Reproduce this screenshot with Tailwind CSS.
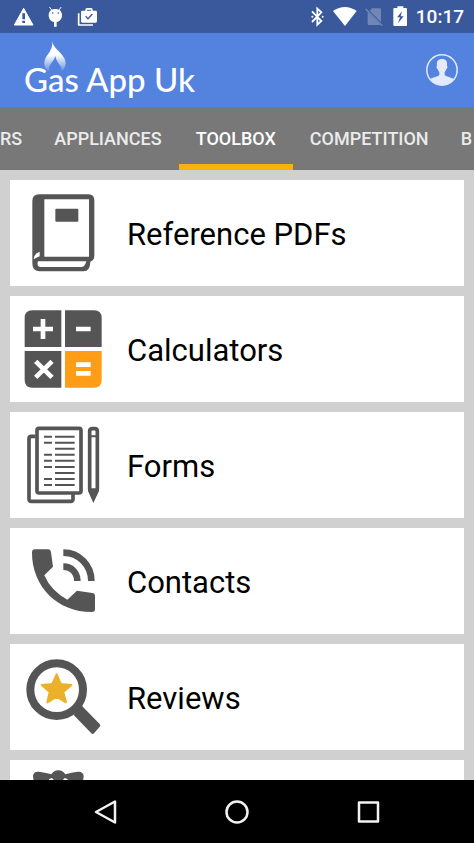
<!DOCTYPE html>
<html lang="en">
<head>
<meta charset="utf-8">
<meta name="viewport" content="width=device-width, initial-scale=1">
<title>Gas App Uk</title>
<script src="https://cdn.jsdelivr.net/npm/@tailwindcss/browser@4"></script>
</head>
<body class="flex h-screen flex-col overflow-hidden bg-[#d0d0d0] font-['Roboto',sans-serif]">
  <!-- Status bar -->
  <div class="flex h-[33px] shrink-0 items-center justify-between bg-[#3a599c] pr-[10px] pl-[14px] text-white">
    <div class="flex items-center gap-[14px]">
      <svg class="h-[21px] w-[20px]" viewBox="42 18 60 63" aria-hidden="true"><path fill="#fff" stroke="#fff" stroke-width="3" stroke-linejoin="round" d="M71 25 99 75H43Z"/><path fill="#3a599c" d="M67 40h8v18h-8zM67 62h8v7h-8z"/></svg>
      <svg class="h-[21px] w-[15px]" viewBox="144 18 45 63" aria-hidden="true"><path stroke="#fff" stroke-width="3" stroke-linecap="round" d="m149 22 7 9M183 22l-7 9"/><path fill="#fff" d="M166 27c12 0 20 7 20 18 0 12-7 20-16 21v14h-8V66c-9-1-16-9-16-21 0-11 8-18 20-18Z"/><circle cx="158" cy="39" r="2.500" fill="#3a599c"/><circle cx="175" cy="39" r="2.500" fill="#3a599c"/></svg>
      <svg class="h-[21px] w-[20px]" viewBox="231 18 60 63" aria-hidden="true"><path fill="none" stroke="#fff" stroke-width="5" stroke-linejoin="round" d="M236 40v35h43"/><path fill="#fff" fill-rule="evenodd" d="M247 32h9v-3q0-5 5-5h12q5 0 5 5v3h9q4 0 4 4v28q0 4-4 4h-40q-4 0-4-4V36q0-4 4-4Zm14 0h12v-3h-12Z"/><path fill="none" stroke="#3a599c" stroke-width="4" d="m257 49 7 7 13-14"/></svg>
    </div>
    <div class="flex items-center gap-2">
      <svg class="h-[21px] w-[14px]" viewBox="225 18 42 63" aria-hidden="true"><path fill="none" stroke="#fff" stroke-width="5.500" d="m228 34 28 29-12 11V26l12 11-28 29"/><circle cx="229" cy="50" r="3" fill="#fff"/><circle cx="260" cy="50" r="3" fill="#fff"/></svg>
      <svg class="h-[21px] w-[24px]" viewBox="291 18 72 63" aria-hidden="true"><path fill="#fff" d="M291 33q36-24 71 0L327 78Z"/></svg>
      <svg class="h-[21px] w-[20px]" viewBox="384 18 60 63" aria-hidden="true"><path fill="#7386b8" d="M405 25h23q4 0 4 4v37L398 32ZM392 37l39 38h-36q-3 0-3-3Z"/><path stroke="#7386b8" stroke-width="4" d="m386 27 50 50"/></svg>
      <svg class="h-[21px] w-[15px]" viewBox="470 18 45 63" aria-hidden="true"><path fill="#fff" d="M483 19h18v5h8q3 0 3 3v48q0 3-3 3h-35q-3 0-3-3V27q0-3 3-3h9Z"/><path fill="#3a599c" d="m497 34-15 18h9l-6 18 17-21h-9Z"/></svg>
      <span class="text-[19px] leading-6 font-medium">10:17</span>
    </div>
  </div>

  <!-- App header -->
  <header class="flex h-[74px] shrink-0 items-center justify-between bg-[#5382df] pr-4 pl-6">
    <a href="#" class="relative pt-[18px] font-['Lato',sans-serif] text-[33px] leading-9 font-medium text-white">
      <svg class="absolute -top-0.5 left-5 h-[31px] w-[22px]" viewBox="133 126 66 93" aria-hidden="true">
        <defs><linearGradient id="flame" x1="0" y1="0" x2="0" y2="1"><stop offset="0.450" stop-color="#fff"/><stop offset="1" stop-color="#fff" stop-opacity="0.100"/></linearGradient></defs>
        <path fill="url(#flame)" d="M158 126c1 24 41 40 40 67-1 13-6 20-13 24 4-17-14-23-18-46-4 18-24 27-18 46-9-4-15-11-15-24 0-25 27-34 24-67Z"/>
      </svg>
      <span class="relative">Gas App Uk</span>
    </a>
    <button type="button" aria-label="Profile" class="size-8">
      <svg class="size-8" viewBox="567 162 96 96" aria-hidden="true"><circle cx="615" cy="210" r="45.500" fill="none" stroke="#e3ebfa" stroke-width="4.500"/><path fill="#e3ebfa" d="M615 177c12 0 17 8 15 20 3 2 1 9-2 10-1 5-3 7-5 9v8c3 6 17 6 27 13-8 11-20 18-35 18s-27-7-35-18c10-7 24-7 27-13v-8c-2-2-4-4-5-9-3-1-5-8-2-10-2-12 3-20 15-20Z"/></svg>
    </button>
  </header>

  <!-- Section tabs -->
  <nav class="flex h-[63px] shrink-0 overflow-hidden bg-[#787878] text-lg font-medium text-[#ebebeb]" aria-label="Sections">
    <a href="#" class="flex shrink-0 items-center pr-[15px]">RS</a>
    <a href="#" class="flex shrink-0 items-center px-[17px]">APPLIANCES</a>
    <a href="#" aria-current="page" class="flex shrink-0 items-center border-b-6 border-[#f9b10b] px-[17px] pt-[6px] text-white">TOOLBOX</a>
    <a href="#" class="flex shrink-0 items-center px-[17px]">COMPETITION</a>
    <a href="#" class="flex shrink-0 items-center pl-[15px]">B</a>
  </nav>

  <!-- Toolbox list -->
  <main class="min-h-0 flex-1 overflow-hidden p-[10px]">
    <ul class="flex flex-col gap-[10px] text-[31px] leading-10 text-black">
      <li><a href="#" class="flex h-[106px] items-center gap-[23px] bg-white pl-[14px]">
        <svg class="size-20" viewBox="72 39 240 240" aria-hidden="true"><path fill="#555" fill-rule="evenodd" d="M117 43h148q18 0 18 18v166q0 13-12 18-1 29-20 29H119q-22 0-22-24V63q0-20 20-20Zm16 15v172h134V58ZM119 215q-18 6-18 23 4-3 18-9Zm-5 29q-5 16 8 17h124q8 0 13-17Z"/><rect x="166" y="86" width="69" height="39" rx="3" fill="#555"/></svg>
        <span class="pt-1">Reference PDFs</span></a></li>
      <li><a href="#" class="flex h-[106px] items-center gap-[23px] bg-white pl-[14px]">
        <svg class="size-20" viewBox="72 57 240 240" aria-hidden="true"><path fill="#555" d="M97 61h87v110H74V84q0-23 23-23ZM195 61h87q23 0 23 23v87H195ZM74 183h110v110H97q-23 0-23-23Z"/><path fill="#ff9d16" d="M195 183h110v87q0 23-23 23h-87Z"/><path stroke="#fff" stroke-width="14" d="M129 87v60M99 117h60M228 117h44M228 224h44M228 250h44M107 214l49 48M156 214l-49 48"/></svg>
        <span class="pt-1">Calculators</span></a></li>
      <li><a href="#" class="flex h-[106px] items-center gap-[23px] bg-white pl-[14px]">
        <svg class="size-20" viewBox="72 45 240 240" aria-hidden="true"><g fill="none" stroke="#555" stroke-width="11" stroke-linejoin="round"><path d="M106 79H94q-7 0-7 7v181q0 7 7 7h118q7 0 7-7v-15"/><rect x="111" y="55" width="132" height="194" rx="6"/><path d="M269 238V64q0-8 8-8h7q8 0 8 8v174"/></g><path fill="#555" d="M264 235h33v8l-17 36-16-36ZM268 76h24v6h-24z"/><path stroke="#555" stroke-width="6" d="M132 80h24M165 80h59M132 98h24M165 98h59M165 116h59M132 134h24M165 134h59M132 152h24M165 152h59M132 171h24M165 171h59M165 189h59M132 207h24M165 207h59M132 225h24M165 225h59"/></svg>
        <span class="pt-1">Forms</span></a></li>
      <li><a href="#" class="flex h-[106px] items-center gap-[23px] bg-white pl-[14px]">
        <svg class="size-20" viewBox="72 33 240 240" aria-hidden="true"><path fill="#555" d="M105 58h39q8 0 9 9l6 43-26 26q20 47 69 73l29-27 46 7q8 1 8 9v40q0 8-10 8C173 246 96 170 96 68q0-10 9-10Z"/><path fill="none" stroke="#555" stroke-width="20" d="M190 68c47 0 84 37 84 85M190 110c25 0 42 18 42 43"/></svg>
        <span class="pt-1">Contacts</span></a></li>
      <li><a href="#" class="flex h-[106px] items-center gap-[23px] bg-white pl-[14px]">
        <svg class="size-20" viewBox="72 51 240 240" aria-hidden="true"><circle cx="170" cy="149" r="79" fill="none" stroke="#555" stroke-width="24"/><path fill="#555" d="m221 225 23-29 55 56q4 4 0 8l-17 20q-4 4-8 0Z"/><path fill="#ebb12b" stroke="#ebb12b" stroke-width="6" stroke-linejoin="round" d="m170 103 12 29 32 3-24 21 8 31-28-16-28 16 7-31-24-21 32-3Z"/></svg>
        <span class="pt-1">Reviews</span></a></li>
      <li><a href="#" aria-label="More" class="flex h-[106px] items-center bg-white pl-[14px]">
        <svg class="size-20 overflow-visible" viewBox="72 399 240 240" aria-hidden="true"><path fill="#555" d="M99 409q0-15 17-14 18 2 38 8 8-12 21-12t21 12q19-6 37-8 18-1 18 14l-4 30H103Z"/><path fill="#fff" d="m147 418 8-4 5 4v8h-13ZM190 418l5-4 8 4v8h-13Z"/></svg>
      </a></li>
    </ul>
  </main>

  <!-- System navigation -->
  <div class="grid h-[63px] shrink-0 grid-cols-3 place-items-center bg-black px-[39px]">
    <button type="button" aria-label="Back" class="size-6"><svg class="size-6" viewBox="0 0 24 24" fill="none" stroke="#f2f2f2" stroke-width="2.500" stroke-linejoin="round" aria-hidden="true"><path d="M22 1.500v21L3 12Z"/></svg></button>
    <button type="button" aria-label="Home" class="size-6"><svg class="size-6" viewBox="0 0 24 24" fill="none" stroke="#f2f2f2" stroke-width="2.500" aria-hidden="true"><circle cx="12" cy="12" r="10.500"/></svg></button>
    <button type="button" aria-label="Recent apps" class="size-6"><svg class="size-6" viewBox="0 0 24 24" fill="none" stroke="#f2f2f2" stroke-width="2.500" stroke-linejoin="round" aria-hidden="true"><path d="M2 2.500h19v19H2Z"/></svg></button>
  </div>
</body>
</html>
